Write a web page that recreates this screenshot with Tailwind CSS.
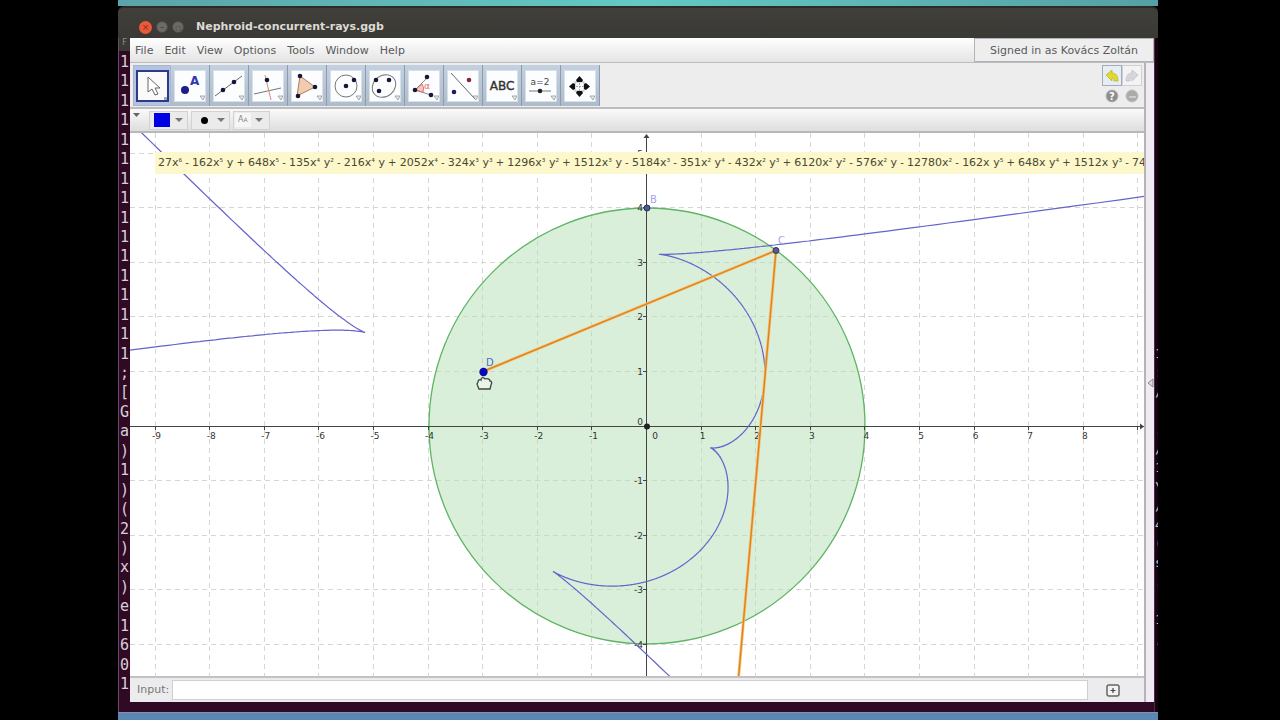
<!DOCTYPE html>
<html lang="en">
  <head>
    <meta charset="UTF-8" />
    <title>Nephroid-concurrent-rays.ggb</title>
    <script src="https://cdn.jsdelivr.net/npm/@tailwindcss/browser@4"></script>
  </head>
  <body class="flex h-screen flex-col overflow-hidden bg-black pr-[122px] pl-[118px] font-['DejaVu_Sans',sans-serif]">
    <!-- Desktop wallpaper -->
    <div class="h-[6px] shrink-0 bg-linear-to-r from-[#5ba3a8] via-[#63c9c2] to-[#56a0a5]"></div>

    <!-- Title bar -->
    <header class="flex h-[32px] shrink-0 items-center gap-[4px] rounded-t-md border-t-2 border-[#2c2b28] bg-linear-to-b from-[#403f3a] to-[#3a3935] pt-[8px] pl-[21px]">
      <button aria-label="Close" class="size-[13px] rounded-full bg-[#e9593a] text-center text-[9px] leading-[12px] text-[#8d2c14]">×</button>
      <button aria-label="Minimize" class="size-[12px] rounded-full border border-[#4b4a44] bg-[#6c6a62] text-[8px] leading-[9px] text-[#3a3935]">–</button>
      <button aria-label="Maximize" class="size-[12px] rounded-full border border-[#4b4a44] bg-[#6c6a62] text-[6px] leading-[9px] text-[#3a3935]">□</button>
      <h1 class="ml-[8px] text-[11px] font-bold text-[#dcdad3]">Nephroid-concurrent-rays.ggb</h1>
    </header>

    <div class="flex min-h-0 flex-1 bg-[#300a24]">
      <!-- Terminal behind the window, left edge -->
      <div class="flex w-[12px] shrink-0 flex-col border-l border-[#6b4b68]">
        <div class="h-[13px] bg-[#3a3935] text-center text-[9px] leading-[9px] text-[#8b8982]">F</div>
        <div id="terminal" class="flex flex-1 flex-col justify-between pt-[2px] pb-[18px] text-center font-['DejaVu_Sans_Mono',monospace] text-[15px] leading-[19px] text-[#d8cfd8]"></div>
      </div>

      <!-- GeoGebra window -->
      <main class="mb-[10px] flex min-w-0 flex-1 flex-col bg-[#ededed] text-[11px] text-[#5a5a5a]">
        <nav class="flex h-[25px] shrink-0 items-stretch border-b border-[#bcbcbc] bg-linear-to-b from-white to-[#e4e4e4]">
          <div class="flex items-center gap-[11px] pt-[2px] pl-[5px]">
            <button>File</button>
            <button>Edit</button>
            <button>View</button>
            <button>Options</button>
            <button>Tools</button>
            <button>Window</button>
            <button>Help</button>
          </div>
          <button class="ml-auto border border-[#b4b2b8] bg-[#eeeeef] px-[15px] pt-[2px]">Signed in as Kovács Zoltán</button>
        </nav>

        <div class="flex min-h-0 flex-1">
          <div class="flex min-w-0 flex-1 flex-col border-r-2 border-[#b5b3b8]">
            <!-- Toolbar -->
            <div class="flex h-[46px] shrink-0 items-start justify-between border-b-2 border-[#bdbdbd] pt-[2px] pr-[2px] pl-[3px]">
              <div class="flex h-[41px] bg-[#b9c6d8]">
                <button aria-label="Move" class="flex w-[38px] items-center justify-center border border-[#a9b6d0] bg-[#b4c3e0]">
                  <svg class="h-[32px] w-[33px] border-2 border-[#2d3a8c] bg-[#fafafa]" viewBox="0 0 29 28"><path d="M10 5v15l4-3 3 6 3-1-3-6h5z" fill="#fff" stroke="#666" /><path d="M26 25h3v3h-3z" fill="#aaa" /></svg>
                </button>
                <button aria-label="Point" class="flex w-[39px] items-center justify-center border-r border-[#8f9bad] bg-linear-to-b from-[#c3d0e0] to-[#aebccc]">
                  <svg class="size-[32px] border border-[#d8e0e9] bg-[#fcfdfe]" viewBox="0 0 30 30"><circle cx="10" cy="19" r="4" fill="#1c1c8c" /><text x="15" y="14" font-size="12" font-weight="bold" fill="#3434b4">A</text><path d="M25 25h5l-2 4z" fill="#eee" stroke="#888" stroke-width=".7" /></svg>
                </button>
                <button aria-label="Line" class="flex w-[39px] items-center justify-center border-r border-[#8f9bad] bg-linear-to-b from-[#c3d0e0] to-[#aebccc]">
                  <svg class="size-[32px] border border-[#d8e0e9] bg-[#fcfdfe]" viewBox="0 0 30 30"><path d="M1 25 28 5" stroke="#666" /><g fill="#16163c"><circle cx="9" cy="19" r="2.3" /><circle cx="20" cy="11" r="2.3" /></g><path d="M25 25h5l-2 4z" fill="#eee" stroke="#888" stroke-width=".7" /></svg>
                </button>
                <button aria-label="Perpendicular line" class="flex w-[39px] items-center justify-center border-r border-[#8f9bad] bg-linear-to-b from-[#c3d0e0] to-[#aebccc]">
                  <svg class="size-[32px] border border-[#d8e0e9] bg-[#fcfdfe]" viewBox="0 0 30 30"><path d="M1 23 28 17" stroke="#777" /><path d="m12 4 6 25" stroke="#e08a80" /><circle cx="14" cy="9" r="2.3" fill="#16163c" /><path d="M25 25h5l-2 4z" fill="#eee" stroke="#888" stroke-width=".7" /></svg>
                </button>
                <button aria-label="Polygon" class="flex w-[39px] items-center justify-center border-r border-[#8f9bad] bg-linear-to-b from-[#c3d0e0] to-[#aebccc]">
                  <svg class="size-[32px] border border-[#d8e0e9] bg-[#fcfdfe]" viewBox="0 0 30 30"><path d="M8 5 23 16 5 25z" fill="#f0cdb2" stroke="#b07a58" /><g fill="#16163c"><circle cx="8" cy="5" r="2.3" /><circle cx="23" cy="16" r="2.3" /><circle cx="6" cy="25" r="2.3" /></g><path d="M25 25h5l-2 4z" fill="#eee" stroke="#888" stroke-width=".7" /></svg>
                </button>
                <button aria-label="Circle with center" class="flex w-[39px] items-center justify-center border-r border-[#8f9bad] bg-linear-to-b from-[#c3d0e0] to-[#aebccc]">
                  <svg class="size-[32px] border border-[#d8e0e9] bg-[#fcfdfe]" viewBox="0 0 30 30"><circle cx="15" cy="15" r="11" fill="none" stroke="#777" /><g fill="#16163c"><circle cx="15" cy="15" r="2.3" /><circle cx="23" cy="9" r="2.3" /></g><path d="M25 25h5l-2 4z" fill="#eee" stroke="#888" stroke-width=".7" /></svg>
                </button>
                <button aria-label="Ellipse" class="flex w-[39px] items-center justify-center border-r border-[#8f9bad] bg-linear-to-b from-[#c3d0e0] to-[#aebccc]">
                  <svg class="size-[32px] border border-[#d8e0e9] bg-[#fcfdfe]" viewBox="0 0 30 30"><ellipse cx="14" cy="15" rx="12.5" ry="10.5" transform="rotate(-40 14 15)" fill="none" stroke="#777" /><g fill="#16163c"><circle cx="6" cy="9" r="2.3" /><circle cx="19" cy="9" r="2.3" /><circle cx="9" cy="20" r="2.3" /></g><path d="M25 25h5l-2 4z" fill="#eee" stroke="#888" stroke-width=".7" /></svg>
                </button>
                <button aria-label="Angle" class="flex w-[39px] items-center justify-center border-r border-[#8f9bad] bg-linear-to-b from-[#c3d0e0] to-[#aebccc]">
                  <svg class="size-[32px] border border-[#d8e0e9] bg-[#fcfdfe]" viewBox="0 0 30 30"><path d="m6 19 7-6a8 8 0 0 1 1 8z" fill="#f7c4c0" stroke="#dc7a74" /><path d="M19 6 6 19l16 5" fill="none" stroke="#a08080" /><text x="15" y="18" font-size="9" fill="#e06c66">α</text><g fill="#16163c"><circle cx="6" cy="19" r="2.3" /><circle cx="18" cy="6" r="2.3" /><circle cx="22" cy="24" r="2.3" /></g><path d="M25 25h5l-2 4z" fill="#eee" stroke="#888" stroke-width=".7" /></svg>
                </button>
                <button aria-label="Reflect about line" class="flex w-[39px] items-center justify-center border-r border-[#8f9bad] bg-linear-to-b from-[#c3d0e0] to-[#aebccc]">
                  <svg class="size-[32px] border border-[#d8e0e9] bg-[#fcfdfe]" viewBox="0 0 30 30"><path d="m3 2 24 26" stroke="#666" /><circle cx="6" cy="21" r="2.3" fill="#1c1c5c" /><circle cx="21" cy="9" r="2.3" fill="#8c2040" /><path d="M25 25h5l-2 4z" fill="#eee" stroke="#888" stroke-width=".7" /></svg>
                </button>
                <button aria-label="Text" class="flex w-[39px] items-center justify-center border-r border-[#8f9bad] bg-linear-to-b from-[#c3d0e0] to-[#aebccc]">
                  <svg class="size-[32px] border border-[#d8e0e9] bg-[#fcfdfe]" viewBox="0 0 30 30"><text x="15" y="19" text-anchor="middle" font-size="12" stroke="#333" stroke-width=".4" fill="#333">ABC</text><path d="M25 25h5l-2 4z" fill="#eee" stroke="#888" stroke-width=".7" /></svg>
                </button>
                <button aria-label="Slider" class="flex w-[39px] items-center justify-center border-r border-[#8f9bad] bg-linear-to-b from-[#c3d0e0] to-[#aebccc]">
                  <svg class="size-[32px] border border-[#d8e0e9] bg-[#fcfdfe]" viewBox="0 0 30 30"><text x="14" y="14" text-anchor="middle" font-size="9" fill="#444">a=2</text><path d="M3 20h22" stroke="#777" /><circle cx="14" cy="20" r="2.3" fill="#222" /><path d="M25 25h5l-2 4z" fill="#eee" stroke="#888" stroke-width=".7" /></svg>
                </button>
                <button aria-label="Move graphics view" class="flex w-[39px] items-center justify-center border-r border-[#8f9bad] bg-linear-to-b from-[#c3d0e0] to-[#aebccc]">
                  <svg class="size-[32px] border border-[#d8e0e9] bg-[#fcfdfe]" viewBox="0 0 30 30"><rect x="10" y="11" width="9" height="9" fill="none" stroke="#bbb" /><path d="M14.5 9v13M8 15.5h13" stroke="#aaa" stroke-dasharray="2 1" /><path d="m14.5 5 3.5 4-1 2h-5l-1-2zM14.5 26l3.5-4-1-2h-5l-1 2zM4 15.5l4-3.5 2 1v5l-2 1zM25 15.5l-4-3.5-2 1v5l2 1z" fill="#111" /><path d="M25 25h5l-2 4z" fill="#eee" stroke="#888" stroke-width=".7" /></svg>
                </button>
              </div>

              <div class="grid grid-cols-[20px_20px] gap-y-[1px]">
                <button aria-label="Undo" class="flex h-[21px] items-center justify-center border border-[#9fadbd] bg-[#e6eef5]">
                  <svg class="size-[16px]" viewBox="0 0 16 16"><path d="m2 7 6-5v3c4 0 6 3 6 8h-4c0-3-1-3-2-3v3z" fill="#e2d92a" stroke="#b5ae30" stroke-width=".7" /></svg>
                </button>
                <button aria-label="Redo" class="flex h-[21px] items-center justify-center border border-[#d0d0d2] bg-[#f3f3f4]">
                  <svg class="size-[16px]" viewBox="0 0 16 16"><path d="M14 7 8 2v3c-4 0-6 3-6 8h4c0-3 1-3 2-3v3z" fill="#d6d6da" stroke="#bdbdc4" stroke-width=".7" /></svg>
                </button>
                <button aria-label="Help" class="flex h-[18px] items-center justify-center">
                  <svg class="size-[14px]" viewBox="0 0 14 14"><circle cx="7" cy="7" r="6" fill="#8d8d8d" stroke="#b5b5b5" /><text x="7" y="11" text-anchor="middle" font-size="10" font-weight="bold" fill="#fff">?</text></svg>
                </button>
                <button aria-label="Settings" class="flex h-[18px] items-center justify-center">
                  <svg class="size-[14px]" viewBox="0 0 14 14"><circle cx="7" cy="7" r="6" fill="#aaa" stroke="#c2c2c2" /><path d="M4 8h7" stroke="#ccc" stroke-width="2" /></svg>
                </button>
              </div>
            </div>

            <!-- Style bar -->
            <div class="flex h-[24px] shrink-0 items-center gap-[3px] border-b-2 border-[#b8b8b8] bg-linear-to-b from-[#fafafa] to-[#dedede] pl-[3px]">
              <button aria-label="Toggle style bar" class="flex h-full w-[13px] items-start pt-[4px]"><svg class="h-[4px] w-[7px]" viewBox="0 0 7 4"><path d="M0 0h7L3.5 4z" fill="#666" /></svg></button>
              <button aria-label="Color" class="flex h-[19px] w-[39px] items-center justify-between border border-[#d2d2d2] bg-[#ebebeb] px-[4px]">
                <span class="h-[14px] w-[16px] bg-[#0000e4]"></span><svg class="h-[4px] w-[8px]" viewBox="0 0 8 4"><path d="M0 0h8L4 4z" fill="#777" /></svg>
              </button>
              <button aria-label="Point style" class="flex h-[19px] w-[39px] items-center justify-between border border-[#d2d2d2] bg-[#ebebeb] pr-[4px] pl-[9px]">
                <span class="size-[7px] rounded-full bg-black"></span><svg class="h-[4px] w-[8px]" viewBox="0 0 8 4"><path d="M0 0h8L4 4z" fill="#777" /></svg>
              </button>
              <button aria-label="Label style" class="flex h-[19px] w-[37px] items-center justify-between border border-[#d2d2d2] bg-[#ebebeb] pr-[6px] pl-[1px]">
                <span class="bg-[#f6f6f6] px-[3px] text-[8px] leading-[14px] text-[#888]">A<span class="text-[6px]">A</span></span><svg class="h-[4px] w-[8px]" viewBox="0 0 8 4"><path d="M0 0h8L4 4z" fill="#777" /></svg>
              </button>
            </div>

            <!-- Graphics view -->
            <div class="relative min-h-0 flex-1 overflow-hidden bg-white">
              <svg class="absolute inset-0 size-full">
                <g id="grid" stroke="#d6d6d6" stroke-dasharray="5 4"></g>
                <circle cx="517" cy="293" r="218" fill="#b4e0b4" fill-opacity=".5" stroke="#5fb464" stroke-width="1.3" />
                <g stroke="#444">
                  <path d="M0 293.5H1014M516.5 2V543" />
                  <path d="M1014 293.5l-4-3v6zM516.5 1l-3 4h6z" fill="#444" stroke="none" />
                  <path id="ticks" />
                </g>
                <g id="labels" font-size="9" fill="#333"></g>
                <path id="caustic" fill="none" stroke="#6464cc" stroke-width="1.2" />
                <path d="M353 238.5 646 117.5 608.5 545" fill="none" stroke="#f5c67c" stroke-width="3" />
                <path d="M353 238.5 646 117.5 608.5 545" fill="none" stroke="#e0841e" stroke-width="1.5" />
                <circle cx="517" cy="293.5" r="3" fill="#222" />
                <circle cx="517" cy="75" r="3" fill="#4a5aa0" stroke="#2a2f50" />
                <circle cx="646" cy="117.5" r="3" fill="#5a5a90" stroke="#34345c" />
                <circle cx="353.5" cy="239" r="4.2" fill="#0a0ab4" />
                <g font-size="10" fill="#a9a0ea">
                  <text x="520" y="70">B</text>
                  <text x="648" y="111">C</text>
                  <text x="356" y="233" fill="#4c6cc8">D</text>
                </g>
                <!-- Grabbing hand cursor -->
                <path d="M348 249c0-2 2-3 3-2 0-3 3-3 4-1 2-1 5 0 5 2 2 0 2 2 1 4l-1 4h-11l-2-5z" fill="#e9f5e9" stroke="#444" stroke-width="1.3" />
              </svg>
              <p id="formula" class="absolute top-[19px] right-0 left-[25px] h-[22px] overflow-hidden bg-[#fdf8cb] pl-[3px] text-[11px] leading-[22px] whitespace-pre text-[#4a4830]">27x⁶ - 162x⁵ y + 648x⁵ - 135x⁴ y² - 216x⁴ y + 2052x⁴ - 324x³ y³ + 1296x³ y² + 1512x³ y - 5184x³ - 351x² y⁴ - 432x² y³ + 6120x² y² - 576x² y - 12780x² - 162x y⁵ + 648x y⁴ + 1512x y³ - 74</p>
            </div>

            <!-- Input bar -->
            <div class="flex h-[26px] shrink-0 items-center border-t-2 border-[#c2c2c2] bg-[#ececee]">
              <label for="cmd" class="w-[42px] pl-[7px] text-[#777]">Input:</label>
              <input id="cmd" class="h-[20px] min-w-0 flex-1 border border-[#cfcfd2] bg-white px-1 outline-none" />
              <button aria-label="Input help" class="flex w-[56px] justify-center pr-[7px]">
                <svg class="h-[13px] w-[16px]" viewBox="0 0 16 13"><rect x="2" y="1" width="12" height="11" rx="2" fill="#f2f2f2" stroke="#666" stroke-width="1.5" /><path d="M8 4v5M5.5 6.5h5" stroke="#444" stroke-width="1.2" /></svg>
              </button>
            </div>
          </div>
          <!-- Collapsed side panel with its drag handle -->
          <div class="flex w-[8px] shrink-0 items-center justify-end bg-[#f0ebf2]">
            <svg class="h-[10px] w-[7px]" viewBox="0 0 7 10"><path d="M6 1 1 5l5 4z" fill="#ddd" stroke="#888" /></svg>
          </div>
        </div>
      </main>

      <!-- Terminal behind the window, right edge -->
      <div id="terminal-right" class="w-[4px] shrink-0 overflow-hidden border-l border-[#4b2b48] bg-[#17040f] pt-[306px] font-['DejaVu_Sans_Mono',monospace] text-[13px] leading-[19px] text-[#cfc4d0]"></div>
    </div>

    <div class="h-[8px] shrink-0 border-t border-[#8c8cae] bg-[#5b86b4]"></div>

    <script>
      const ORIGIN_X = 517, ORIGIN_Y = 293.5, UNIT = 54.6;
      const px = (x) => ORIGIN_X + x * UNIT;
      const py = (y) => ORIGIN_Y - y * UNIT;

      // Terminal characters
      document.getElementById("terminal").innerHTML = [..."1111111111111111;[Ga)1)(2)x)e1601"].map((c) => `<span>${c}</span>`).join("");
      document.getElementById("terminal-right").innerHTML = [..."1:/ ./1\\/4(s. 1,"].join("<br />");

      // Smaller exponents and operators in the equation
      const formula = document.getElementById("formula");
      formula.innerHTML = formula.textContent
        .replace(/ [-+] /g, (s) => `<span class="text-[10px]">${s}</span>`)
        .replace(/[²³⁴⁵⁶]/g, (s) => `<span class="align-[1px] text-[9px] leading-none">${s}</span>`);

      // Grid, ticks and axis numbers
      let grid = "", ticks = "", labels = "";
      for (let i = -9; i <= 9; i++) {
        const x = Math.floor(px(i) - 0.5) + 0.5;
        if (i !== 0) grid += `<path d="M${x} 0V543" />`;
        ticks += `M${x} 293v4`;
        if (i < 9) labels += `<text x="${px(i) + (i === 0 ? 8 : 1)}" y="306" text-anchor="middle">${i}</text>`;
      }
      for (let j = -4; j <= 5; j++) {
        const y = Math.floor(py(j) - 0.5) + 0.5;
        if (j !== 0) grid += `<path d="M0 ${y}H3000" />`;
        ticks += `M513 ${y}h4`;
        labels += `<text x="513" y="${py(j) + (j === 0 ? -2 : 3)}" text-anchor="end">${j}</text>`;
      }
      document.getElementById("grid").innerHTML = grid;
      document.getElementById("ticks").setAttribute("d", ticks);
      document.getElementById("labels").innerHTML = labels;

      // Envelope of the rays from D reflected in the circle
      const R = 4, D = [-3, 1];
      let d = "", pen = false;
      for (let k = 0; k <= 3600; k++) {
        const t = (k * Math.PI) / 1800;
        const n = [Math.cos(t), Math.sin(t)];
        const v = [R * n[0] - D[0], R * n[1] - D[1]];
        const len = Math.hypot(v[0], v[1]);
        const cos = (v[0] * n[0] + v[1] * n[1]) / len;
        const m = 1 / (2 / (R * cos) - 1 / len);
        const x = R * n[0] + m * (v[0] / len - 2 * cos * n[0]);
        const y = R * n[1] + m * (v[1] / len - 2 * cos * n[1]);
        if (Math.abs(x) > 14 || Math.abs(y) > 10) {
          pen = false;
          continue;
        }
        d += `${pen ? "L" : "M"}${px(x).toFixed(1)} ${py(y).toFixed(1)}`;
        pen = true;
      }
      document.getElementById("caustic").setAttribute("d", d);
    </script>
  </body>
</html>
